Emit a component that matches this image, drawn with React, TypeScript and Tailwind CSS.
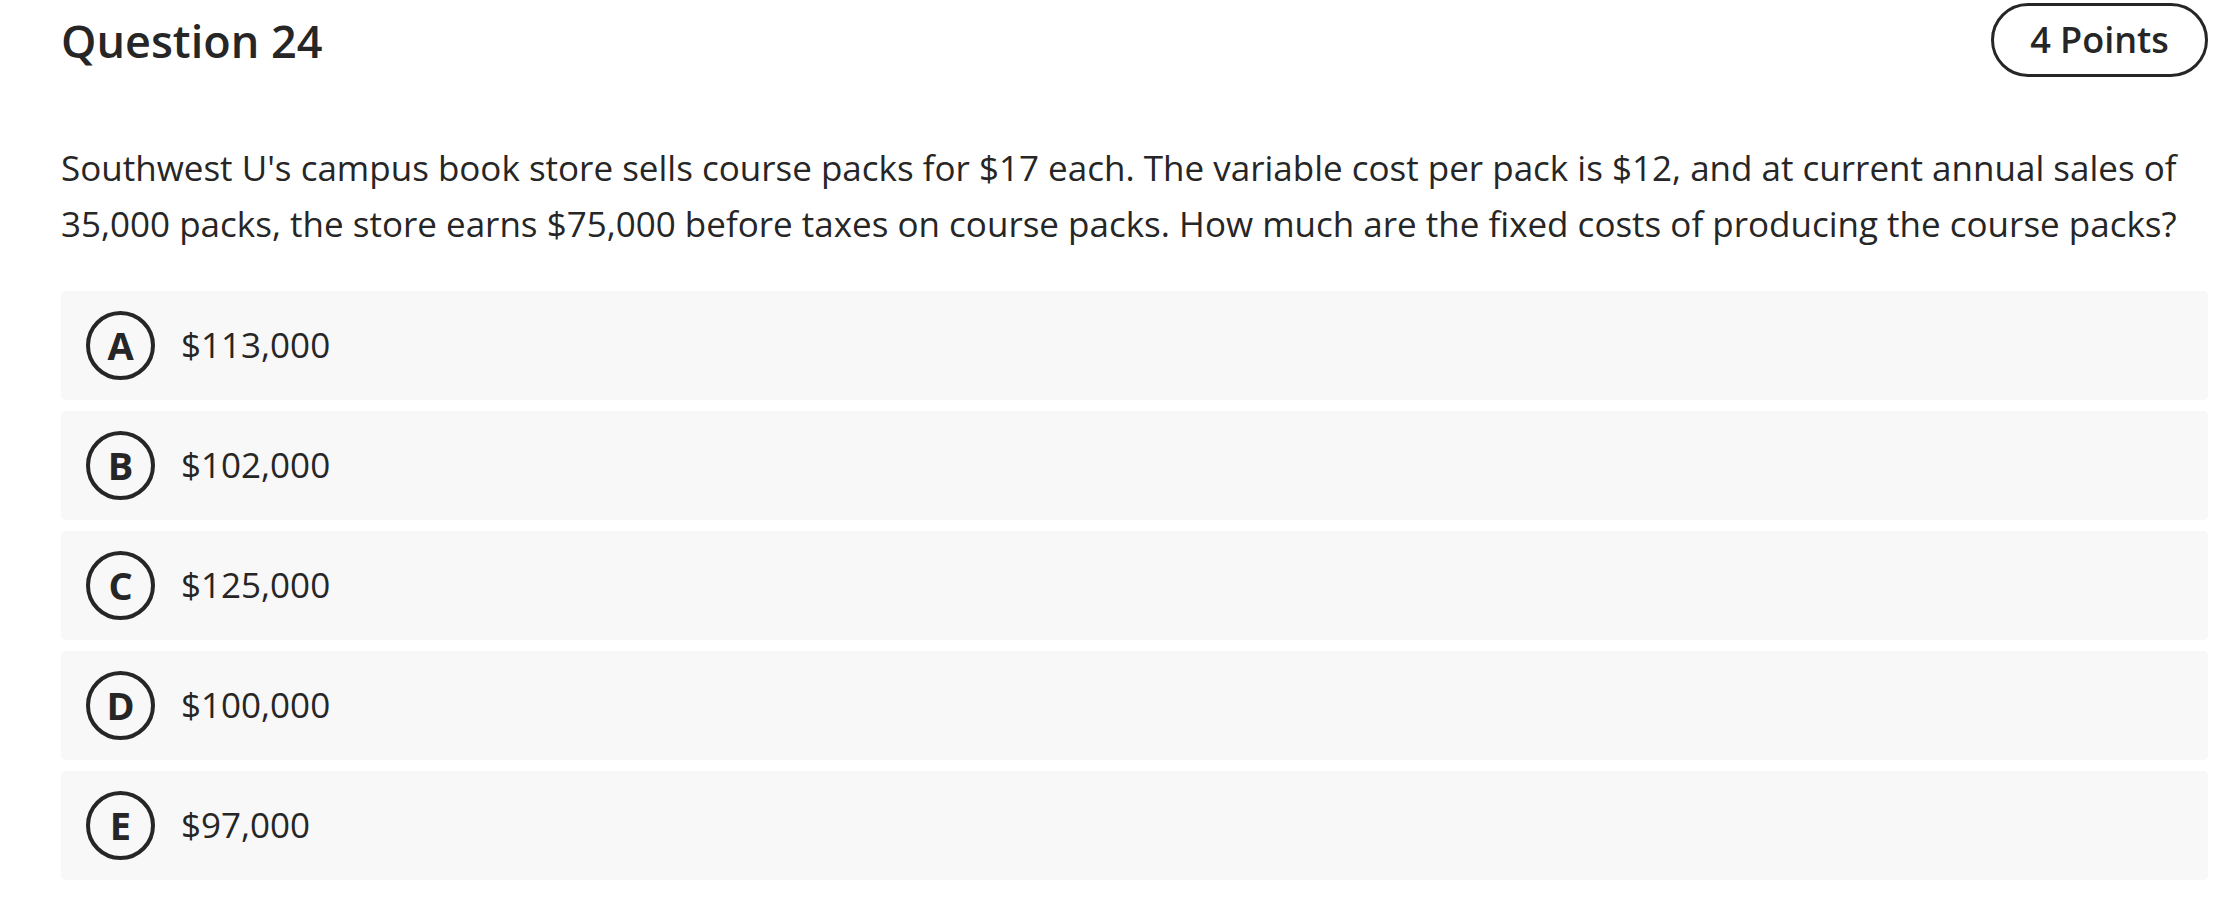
const options = [
  { letter: 'A', value: '$113,000' },
  { letter: 'B', value: '$102,000' },
  { letter: 'C', value: '$125,000' },
  { letter: 'D', value: '$100,000' },
  { letter: 'E', value: '$97,000' },
];

export default function App() {
  return (
    <main className="min-h-screen bg-white pl-[61px] pr-[32px] pt-[3px] font-['Open_Sans',sans-serif] text-[#262626]">
      <header className="flex h-[74px] items-center justify-between">
        <h1 className="text-[45px] font-semibold leading-none">Question 24</h1>
        <div className="flex h-[74px] w-[217px] items-center justify-center rounded-full border-[3px] border-[#262626] text-[36px] font-semibold">
          4 Points
        </div>
      </header>

      <p className="mt-[63px] text-[35px] leading-[56px]">
        Southwest U's campus book store sells course packs for $17 each. The variable cost per pack is $12, and at
        current annual sales of 35,000 packs, the store earns $75,000 before taxes on course packs. How much are the
        fixed costs of producing the course packs?
      </p>

      <ul className="mt-[39px] flex flex-col gap-[11px]">
        {options.map((o) => (
          <li
            key={o.letter}
            className="flex h-[109px] items-center gap-[26px] rounded-[5px] bg-[#f8f8f8] pl-[25px]"
          >
            <span className="flex size-[69px] items-center justify-center rounded-full border-[4px] border-[#262626] text-[38px] font-bold">
              {o.letter}
            </span>
            <span className="text-[35px]">{o.value}</span>
          </li>
        ))}
      </ul>
    </main>
  );
}
